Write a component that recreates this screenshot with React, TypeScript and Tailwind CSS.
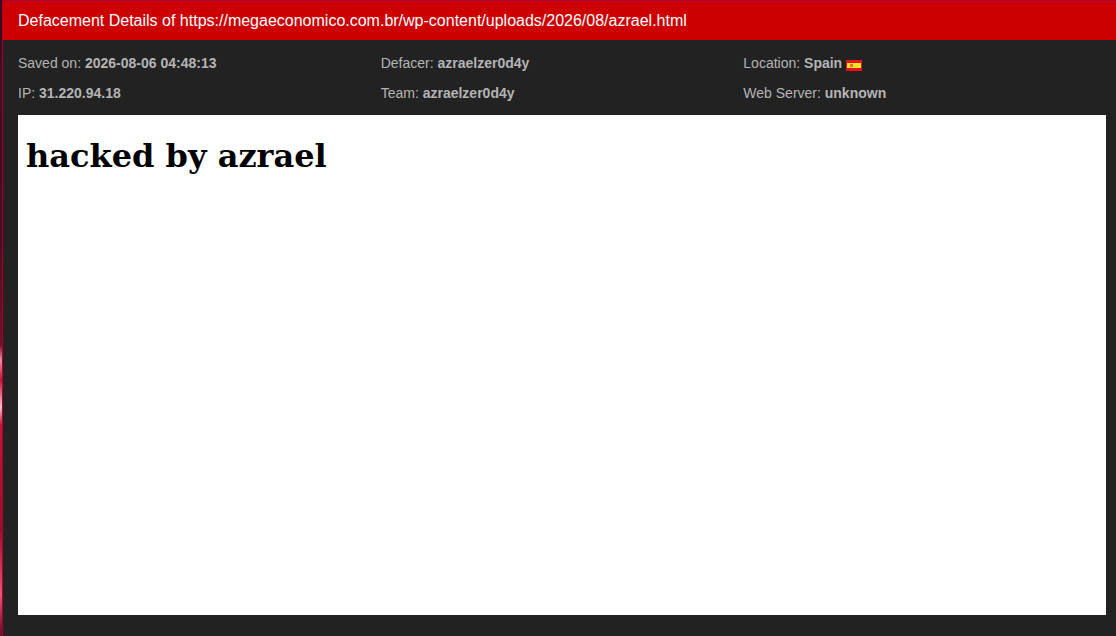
const rows = [
  [["Saved on: ", "2026-08-06 04:48:13"], ["Defacer: ", "azraelzer0d4y"], ["Location: ", "Spain"]],
  [["IP: ", "31.220.94.18"], ["Team: ", "azraelzer0d4y"], ["Web Server: ", "unknown"]],
];

function Flag() {
  return (
    <svg width="16" height="11" viewBox="0 0 16 11" className="ml-1 inline-block align-[-3px]">
      <rect width="16" height="11" fill="#e8121c" />
      <rect x="1" y="3" width="14" height="5" fill="#f5e62a" />
      <rect x="4" y="4" width="3" height="3" fill="#d9734a" />
    </svg>
  );
}

export default function App() {
  return (
    <div className="flex h-[636px] w-[1116px] overflow-hidden font-['Liberation_Sans',sans-serif]">
      <div className="w-[2px] shrink-0 bg-[linear-gradient(180deg,#3b0a22_0px,#4a0a28_240px,#7a0a30_345px,#f08aa8_360px,#c8103c_380px,#f5c0d0_407px,#c8103c_425px,#a00a30_530px,#f05078_595px,#7a0a30_630px)]" />
      <div className="flex min-w-0 flex-1 flex-col">
        <div className="h-px shrink-0 bg-[#a0083c]" />
        <div className="flex flex-1 flex-col border-l border-[#a80020] bg-[#222222] opacity-[0.999]">
          <div className="flex h-[39px] items-center bg-[#cc0000] pl-[15px] text-base text-white">
            Defacement Details of https://megaeconomico.com.br/wp-content/uploads/2026/08/azrael.html
          </div>
          <div className="flex flex-col pl-[15px] pr-[10px] pt-[8px]">
            {rows.map((row, i) => (
              <div key={i} className="grid h-[30px] grid-cols-3 items-center text-sm text-[#b4b4b4]">
                {row.map(([label, value], j) => (
                  <div key={j}>
                    {label}
                    <b>{value}</b>
                    {value === "Spain" && <Flag />}
                  </div>
                ))}
              </div>
            ))}
            <div className="mt-[7px] h-[500px] bg-white p-2">
              <h1 className="mt-[14px] font-['DejaVu_Serif',serif] text-[32px] font-bold leading-[38px] text-black">
                hacked by azrael
              </h1>
            </div>
          </div>
        </div>
      </div>
    </div>
  );
}
